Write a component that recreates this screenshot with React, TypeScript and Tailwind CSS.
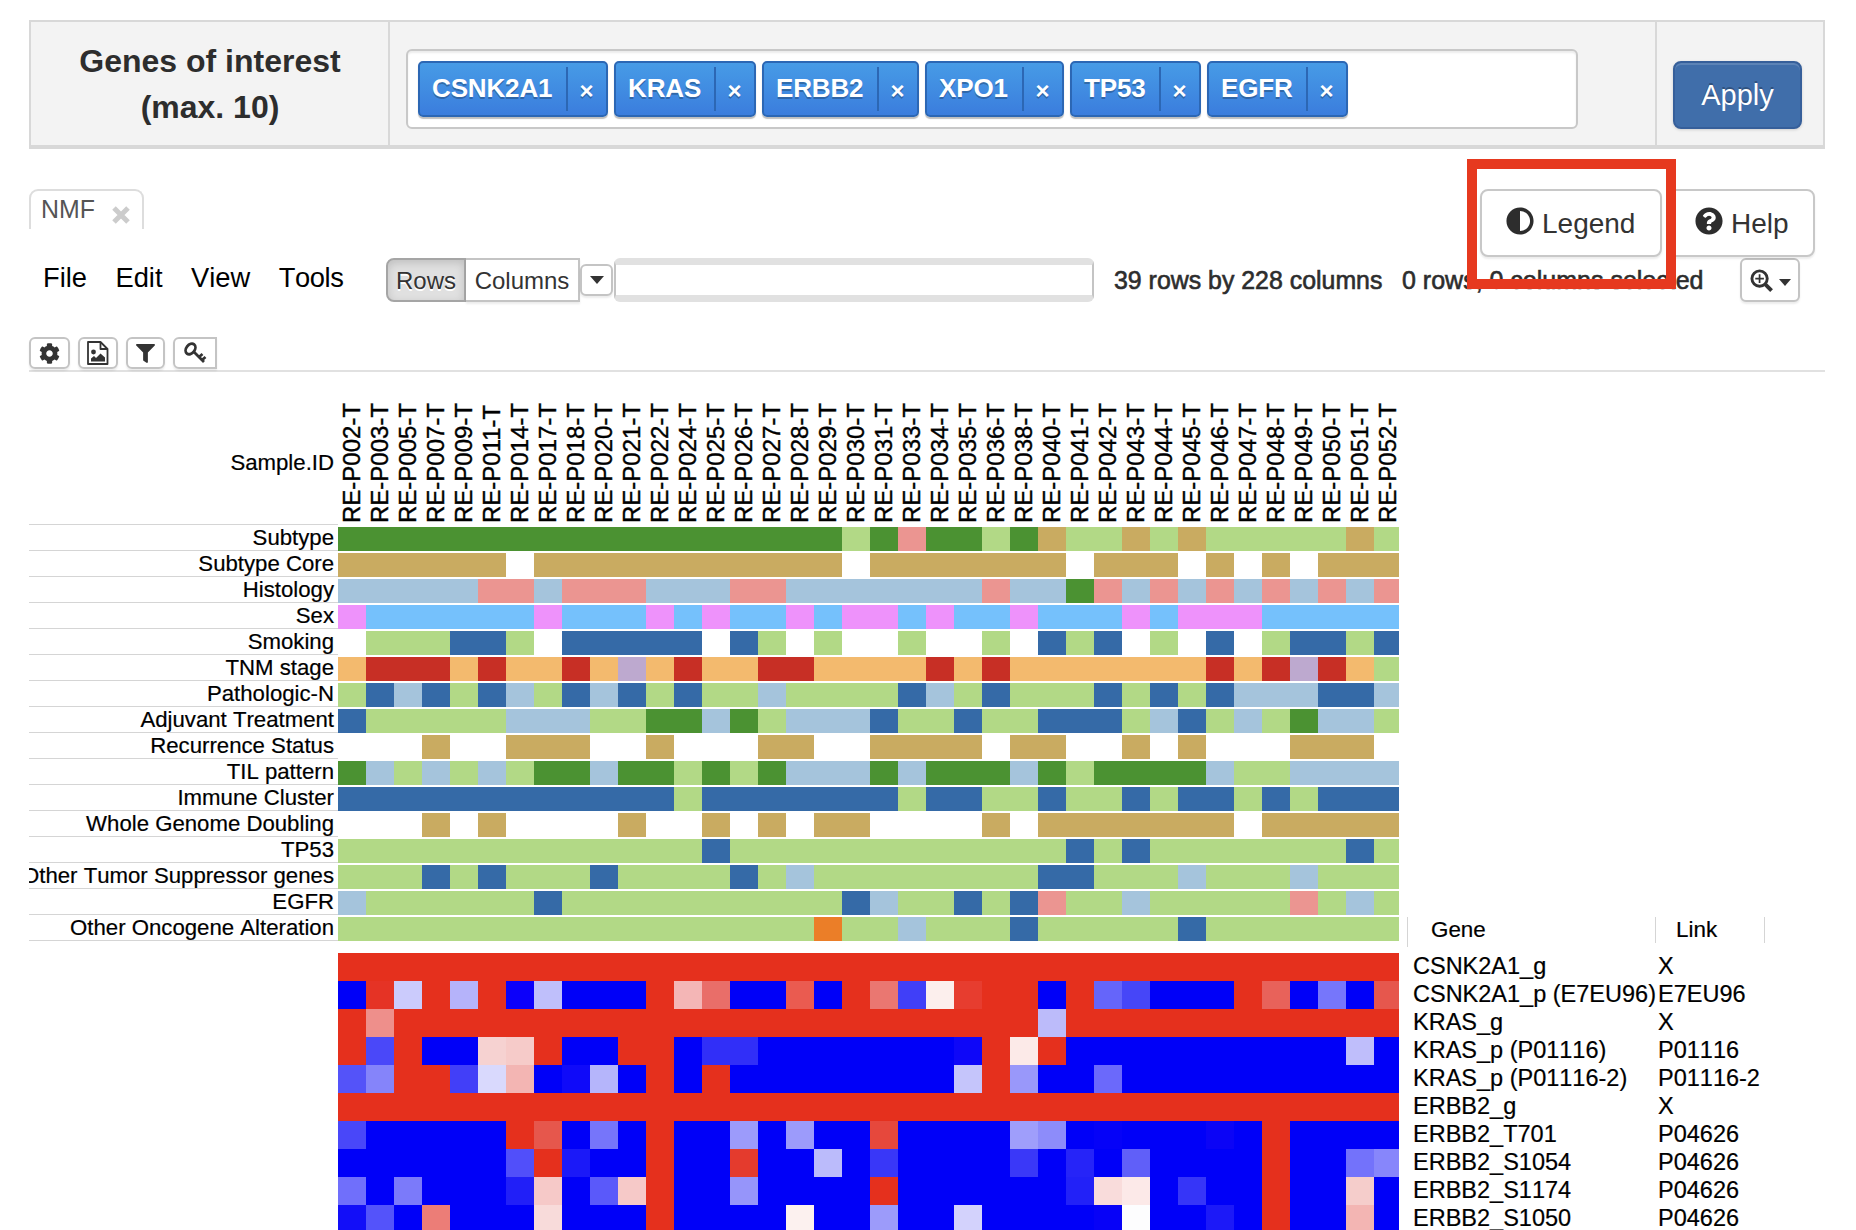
import { FaAdjust, FaQuestionCircle, FaFilter, FaCog } from "react-icons/fa";

const SAMPLES = [
  "002", "003", "005", "007", "009", "011", "014", "017", "018", "020", "021", "022", "024",
  "025", "026", "027", "028", "029", "030", "031", "033", "034", "035", "036", "038", "040",
  "041", "042", "043", "044", "045", "046", "047", "048", "049", "050", "051", "052",
];

const PALETTE: Record<string, string> = {
  D: "#4b9232", G: "#b2d986", T: "#c9ab61", P: "#eb9591", L: "#a5c4dc", B: "#356aa7",
  M: "#ee92fb", S: "#75c1fc", O: "#f3ba6e", R: "#c72f25", V: "#bda9cf", N: "#eb7e28",
  W: "#ffffff", r: "#e5301d", b: "#0000f8",
};

// Each track is a run-length list: a palette letter with its cell count.
const TRACKS: [string, string][] = [
  ["Subtype", "D18 G1 D1 P1 D2 G1 D1 T1 G2 T1 G1 T1 G5 T1 G1"],
  ["Subtype Core", "T6 W1 T11 W1 T7 W1 T3 W1 T1 W1 T1 W1 T3"],
  ["Histology", "L5 P2 L1 P3 L3 P2 L7 P1 L2 D1 P1 L1 P1 L1 P1 L1 P1 L1 P1 L1 P1"],
  ["Sex", "M1 S6 M1 S3 M1 S1 M1 S2 M1 S1 M2 S1 M1 S2 M1 S3 M1 S1 M3 S5"],
  ["Smoking", "W1 G3 B2 G1 W1 B5 W1 B1 G1 W1 G1 W2 G1 W2 G1 W1 B1 G1 B1 W1 G1 W1 B1 W1 G1 B2 G1 B1"],
  ["TNM stage", "O1 R3 O1 R1 O2 R1 O1 V1 O1 R1 O2 R2 O4 R1 O1 R1 O7 R1 O1 R1 V1 R1 O1 G1"],
  ["Pathologic-N", "G1 B1 L1 B1 G1 B1 L1 G1 B1 L1 B1 G1 B1 G2 L1 G4 B1 L1 G1 B1 G3 B1 G1 B1 G1 B1 L3 B2 L1"],
  ["Adjuvant Treatment", "B1 G5 L3 G2 D2 L1 D1 G1 L3 B1 G2 B1 G2 B3 G1 L1 B1 G1 L1 G1 D1 L2 G1"],
  ["Recurrence Status", "W3 T1 W2 T3 W2 T1 W3 T2 W2 T4 W1 T2 W2 T1 W1 T1 W3 T3 W1"],
  ["TIL pattern", "D1 L1 G1 L1 G1 L1 G1 D2 L1 D2 G1 D1 G1 D1 L3 D1 L1 D3 L1 D1 G1 D4 L1 G2 L4"],
  ["Immune Cluster", "B12 G1 B7 G1 B2 G2 B1 G2 B1 G1 B2 G1 B1 G1 B3"],
  ["Whole Genome Doubling", "W3 T1 W1 T1 W4 T1 W2 T1 W1 T1 W1 T2 W4 T1 W1 T7 W1 T5"],
  ["TP53", "G13 B1 G12 B1 G1 B1 G7 B1 G1"],
  ["Other Tumor Suppressor genes", "G3 B1 G1 B1 G3 B1 G4 B1 G1 L1 G8 B2 G3 L1 G3 L1 G3"],
  ["EGFR", "L1 G6 B1 G10 B1 L1 G2 B1 G1 B1 P1 G2 L1 G5 P1 G1 L1 G1"],
  ["Other Oncogene Alteration", "G17 N1 G2 L1 G3 B1 G5 B1 G7"],
];

// Heat map rows mix runs of the two saturated colours with single-cell hex values.
const GENES: [string, string, string][] = [
  ["CSNK2A1_g", "X", "r38"],
  ["CSNK2A1_p (E7EU96)", "E7EU96", "b1 #e53325 #cbcbfc r1 #b5b3fa r1 #0c00fa #bfbffb b3 r1 #f4b6b6 #e96e69 b2 #ea5b50 b1 r1 #ea7771 #403ff8 #fcefed #e73d2f r2 b1 r1 #6565fa #4646f8 b3 r1 #e8625a b1 #7676fb b1 #e6574d"],
  ["KRAS_g", "X", "r1 #ee8f8b r23 #bcbbfa r12"],
  ["KRAS_p (P01116)", "P01116", "r1 #4a48f9 r1 b2 #f6d2d1 #f6cbc9 r1 b2 r2 b1 #312ff8 #312ff8 b7 #0e07f8 r1 #fceae8 r1 b10 #bfbefb b1"],
  ["KRAS_p (P01116-2)", "P01116-2", "#5453f9 #8584fa r2 #423ff8 #d9d9fd #f3b5b3 b1 #0f0af9 #b5b5fb b1 r1 b1 r1 b8 #c5c5fb r1 #9998fa b2 #6b69fb b10"],
  ["ERBB2_g", "X", "r38"],
  ["ERBB2_T701", "P04626", "#4947f9 b5 r1 #e6574c b1 #7675fa b1 r1 b2 #9c9bfb b1 #9c9bfb b2 #e6483c b4 #9f9efb #8d8cfa b1 #0502f8 b3 #0b04f6 b1 r1 b4"],
  ["ERBB2_S1054", "P04626", "b6 #514ffa r1 #1b19f8 b2 r1 b2 #e43b2d b2 #bbbbfb b1 #3937f8 b4 #3a38f8 b1 #2624f8 b1 #605ff9 b4 r1 b2 #7372fb #8786fb"],
  ["ERBB2_S1174", "P04626", "#706ffb b1 #7b7afa b3 #211ff8 #f6c9c8 b1 #5a59fa #f6c9c8 r1 b2 #9695fa b4 r1 b6 #2221f8 #f9dcdb #fce9e8 b1 #3635f8 b2 r1 b2 #f5cdcb b1"],
  ["ERBB2_S1050", "P04626", "#120ef8 #5453fa b1 #ec7d77 b3 #f8dbda b3 r1 b4 #fcf1ef b2 #9c9bfa b2 #d3d2fc b4 #0702f7 #fdfdfe b2 #1c19f8 b1 r1 b2 #f3b5b3 b1"],
];

const TAGS: [string, string][] = [
  ["CSNK2A1", "w-[190px]"],
  ["KRAS", "w-[142px]"],
  ["ERBB2", "w-[157px]"],
  ["XPO1", "w-[139px]"],
  ["TP53", "w-[131px]"],
  ["EGFR", "w-[141px]"],
];

function Cells({ runs }: { runs: string }) {
  return (
    <div className="flex h-full w-[1061px] overflow-hidden">
      {runs.split(" ").map((run, i) => {
        const single = run[0] === "#";
        const count = single ? 1 : Number(run.slice(1));
        return (
          <div
            key={i}
            className="h-full shrink-0"
            style={{ width: count * 28, backgroundColor: single ? run : PALETTE[run[0]] }}
          />
        );
      })}
    </div>
  );
}

function Caret({ className }: { className: string }) {
  return (
    <svg viewBox="0 0 14 8" className={className} preserveAspectRatio="none">
      <path d="M0 0h14L7 8z" fill="#333" />
    </svg>
  );
}

function ImageFileIcon() {
  return (
    <svg viewBox="0 0 22 24" className="h-6 w-[22px]" fill="none" stroke="#333" strokeWidth="1.8">
      <path d="M1 1h12.5L20.5 8v15H1z" strokeLinejoin="round" />
      <path d="M13.5 1v7h7" strokeLinejoin="round" />
      <circle cx="6.5" cy="11" r="2.4" fill="#333" stroke="none" />
      <path d="M4 20.5v-3l3-2.5 2 2 4.5-4.5L18 16.500v4z" fill="#333" stroke="none" />
    </svg>
  );
}

function KeyIcon() {
  return (
    <svg viewBox="0 0 24 22" className="h-[22px] w-6" fill="none" stroke="#333">
      <ellipse cx="7.5" cy="7" rx="4.2" ry="5.8" transform="rotate(38 7.5 7)" strokeWidth="2.8" />
      <path d="M11 10l10 10M16 15l3.5-3M19 18l3.5-3" strokeWidth="2.8" />
    </svg>
  );
}

function ZoomIcon() {
  return (
    <svg viewBox="0 0 24 24" className="size-[23px]" fill="none" stroke="#333">
      <circle cx="10" cy="10" r="8" strokeWidth="3" />
      <path d="M16 16l6.5 6.5" strokeWidth="4" />
      <path d="M10 5.5v9M5.5 10h9" strokeWidth="1.8" />
    </svg>
  );
}

export default function App() {
  return (
    <div className="flex h-[1230px] w-[1856px] flex-col overflow-hidden bg-white pt-5 pl-[29px] font-['Liberation_Sans',Arial,sans-serif] text-[#333] [font-kerning:none]">
      <div className="flex h-[129px] w-[1796px] shrink-0 border-2 border-b-4 border-[#d8d8d8] bg-[#f3f3f3]">
        <div className="flex w-[359px] shrink-0 flex-col border-r-2 border-[#d8d8d8] pt-[16px] pl-[1px] text-center text-[32px] leading-[46px] font-bold text-[#2d2d2d]">
          <span>Genes of interest</span>
          <span>(max. 10)</span>
        </div>
        <div className="w-[1267px] shrink-0 border-r-2 border-[#d8d8d8] pt-[27px] pl-4">
          <div className="flex h-20 w-[1172px] gap-[6px] rounded-md border-2 border-[#c8c8c8] bg-white pt-[10px] pl-[10px] shadow-[inset_0_2px_2px_rgba(0,0,0,0.08)]">
            {TAGS.map(([name, width]) => (
              <div
                key={name}
                className={`flex h-14 shrink-0 rounded-[5px] border-2 border-[#2c67b4] bg-linear-to-b from-[#479be6] to-[#3b7ddd] pt-1 text-[26px] leading-[43px] font-bold text-white shadow-[0_2px_1px_rgba(0,0,0,0.25)] [text-shadow:0_2px_0_rgba(0,0,0,0.25)] ${width}`}
              >
                <span className="flex-1 pl-3 tracking-[-0.15px]">{name}</span>
                <span className="h-11 w-10 border-l-2 border-[#2c67b4] pr-[1px] text-center text-[24px] leading-[47px]">×</span>
              </div>
            ))}
          </div>
        </div>
        <div className="flex-1 pt-[39px] pl-4">
          <button className="block h-[68px] w-[129px] rounded-lg border-2 border-[#365f9a] bg-[#406eaa] pt-[2px] text-[29px] text-white shadow-[inset_0_2px_0_rgba(255,255,255,0.15),0_1px_3px_rgba(0,0,0,0.15)] [text-shadow:0_-2px_0_rgba(0,0,0,0.25)]">
            Apply
          </button>
        </div>
      </div>

      <div className="mt-10 flex h-[69px] w-[1786px] shrink-0 justify-between">
        <div className="flex h-10 w-[115px] rounded-t-[9px] border-2 border-b-0 border-[#ddd] pl-[10px] text-[24.9px] leading-[37px] text-[#555]">
          NMF
          <svg viewBox="0 0 18 18" className="mt-[15px] ml-[17px] size-[18px]" stroke="#ccc" strokeWidth="5">
            <path d="M2 2l14 14M16 2L2 16" />
          </svg>
        </div>
        <div className="relative z-10 flex">
          <button className="flex h-[68px] w-[182px] items-center rounded-lg border-2 border-[#c8c8c8] bg-white pl-[24px] text-[28px] shadow-[0_2px_2px_rgba(0,0,0,0.08)]">
            <FaAdjust className="mb-[5px] size-7 text-[#2d2d2d]" />
            <span className="mt-[2px] ml-[8px]">Legend</span>
          </button>
          <button className="ml-[5px] flex h-[68px] w-[148px] items-center rounded-lg border-2 border-[#c8c8c8] bg-white pl-[26px] text-[28px] shadow-[0_2px_2px_rgba(0,0,0,0.08)]">
            <FaQuestionCircle className="mb-[5px] size-7 text-[#2d2d2d]" />
            <span className="mt-[2px] ml-[8px]">Help</span>
          </button>
          <div className="absolute top-[-30px] left-[-13px] h-[130px] w-[209px] border-[10px] border-[#e6391f]" />
        </div>
      </div>

      <div className="flex h-11 w-[1796px] shrink-0 text-[24px]">
        <div className="flex w-[357px] shrink-0 gap-[28.5px] pl-[14px] text-[27.3px] leading-[40px] text-black">
          <span>File</span>
          <span>Edit</span>
          <span>View</span>
          <span className="tracking-[-0.4px]">Tools</span>
        </div>
        <button className="h-11 w-[80px] rounded-l-lg border-2 border-[#a5a5a5] bg-[#e0e0e0] pt-[2px] shadow-[inset_0_3px_8px_rgba(0,0,0,0.15)] [text-shadow:0_2px_0_white]">
          Rows
        </button>
        <button className="h-11 w-[114px] border-2 border-l-0 border-[#c4c4c4] bg-white pt-[2px] shadow-[0_2px_2px_rgba(0,0,0,0.08)]">
          Columns
        </button>
        <button className="mt-[6px] flex h-8 w-[33px] items-center justify-center rounded-md border-2 border-[#c4c4c4] bg-white shadow-[0_2px_2px_rgba(0,0,0,0.08)]">
          <Caret className="h-2 w-[14px]" />
        </button>
        <div className="ml-[1px] h-11 w-[480px] rounded-md border-2 border-y-[7px] border-[#c4c4c4] border-y-[#e1e1e1] bg-white" />
        <span className="ml-[20px] w-[288px] text-[24.9px] leading-[45px] text-[#2d2d2d] [-webkit-text-stroke:0.6px_#2d2d2d]">39 rows by 228 columns</span>
        <span className="w-[338px] text-[25px] leading-[45px] text-[#2d2d2d] [-webkit-text-stroke:0.6px_#2d2d2d]">0 rows, 0 columns selected</span>
        <button className="flex h-11 w-[60px] items-center rounded-md border-2 border-[#c4c4c4] bg-white pl-2 shadow-[0_2px_2px_rgba(0,0,0,0.08)]">
          <ZoomIcon />
          <Caret className="mt-1 ml-[6px] h-[7px] w-3" />
        </button>
      </div>

      <div className="mt-[35px] flex h-[35px] w-[1796px] shrink-0 border-b-2 border-[#e1e1e1]">
        <button className="mr-[8px] flex h-8 w-[41px] items-center justify-center rounded-md border-2 border-[#c4c4c4] shadow-[0_2px_2px_rgba(0,0,0,0.08)]">
          <FaCog className="size-[21px]" />
        </button>
        <button className="mr-2 flex h-8 w-10 items-center justify-center rounded-md border-2 border-[#c4c4c4] shadow-[0_2px_2px_rgba(0,0,0,0.08)]">
          <ImageFileIcon />
        </button>
        <button className="mr-2 flex h-8 w-[39px] items-center justify-center rounded-md border-2 border-[#c4c4c4] shadow-[0_2px_2px_rgba(0,0,0,0.08)]">
          <FaFilter className="size-[19px]" />
        </button>
        <button className="flex h-8 w-11 items-center rounded-l-md border-2 border-[#c4c4c4] pl-2 shadow-[0_2px_2px_rgba(0,0,0,0.08)]">
          <KeyIcon />
        </button>
      </div>

      <div className="flex shrink-0 text-black">
        <div className="w-[309px] shrink-0 overflow-hidden text-[22.2px] [-webkit-text-stroke:0.2px_black]">
          <div className="flex h-[153px] items-end justify-end border-b border-[#d5d5d5] pr-1 pb-[48px] leading-[26px]">
            Sample.ID
          </div>
          {TRACKS.map(([name]) => (
            <div key={name} className="flex h-[26px] justify-end border-b border-[#d5d5d5] pr-1 leading-[25px] whitespace-nowrap">
              {name}
            </div>
          ))}
        </div>
        <div className="w-[1061px] shrink-0">
          <div className="flex h-[155px]">
            {SAMPLES.map((id) => (
              <div
                key={id}
                className="flex h-[151px] w-7 shrink-0 rotate-180 items-center text-[24px] leading-[28px] whitespace-nowrap [writing-mode:vertical-rl] [-webkit-text-stroke:0.4px_black]"
              >
                <span>RE-P{id}-T</span>
              </div>
            ))}
          </div>
          {TRACKS.map(([name, runs]) => (
            <div key={name} className="mb-[2px] h-6">
              <Cells runs={runs} />
            </div>
          ))}
          <div className="mt-3">
            {GENES.map(([name, , runs]) => (
              <div key={name} className="h-7">
                <Cells runs={runs} />
              </div>
            ))}
          </div>
        </div>
        <div className="flex flex-col pt-[545px] pl-2 [-webkit-text-stroke:0.2px_black]">
          <div className="flex h-[36px] items-start text-[22.4px] leading-[25px]">
            <div className="h-[30px] w-[248px] border-l border-[#d5d5d5] pl-[23px]">Gene</div>
            <div className="h-[26px] w-[110px] border-x border-[#d5d5d5] pl-[20px]">Link</div>
          </div>
          {GENES.map(([name, link]) => (
            <div key={name} className="flex h-7 pl-[6px] text-[23.5px] leading-[27px] whitespace-nowrap">
              <span className="w-[245px]">{name}</span>
              <span>{link}</span>
            </div>
          ))}
        </div>
      </div>
    </div>
  );
}
